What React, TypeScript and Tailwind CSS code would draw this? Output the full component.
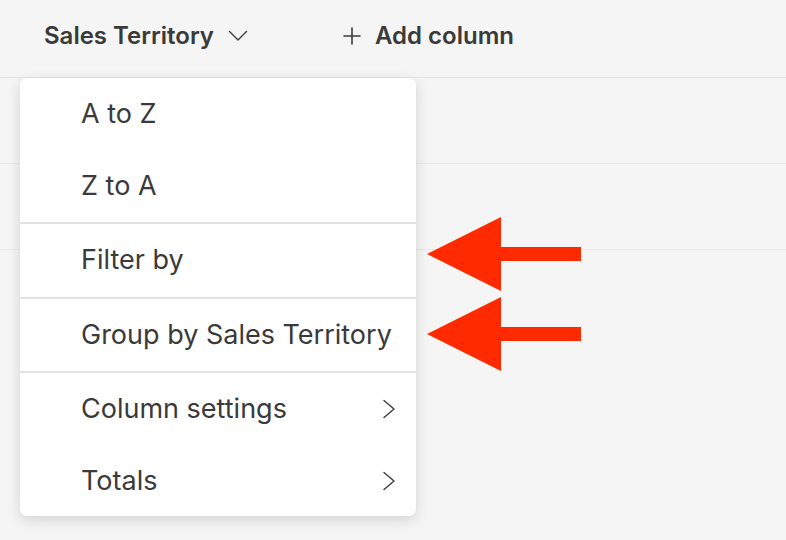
import React from "react";

function ChevronRight() {
  return (
    <svg width="14" height="20" viewBox="0 0 14 20" fill="none" stroke="#3b3b3b" strokeWidth="1.4" strokeLinecap="round" strokeLinejoin="round">
      <path d="M2 1.5 L12 10 L2 18.5" />
    </svg>
  );
}

function Arrow() {
  return (
    <svg width="156" height="76" viewBox="0 0 156 76">
      <polygon points="0,37 74,0 74,30 154,30 154,44 74,44 74,74" fill="#ff2a00" />
    </svg>
  );
}

export default function App() {
  const item = "flex items-center justify-between h-[72px] pl-[61px] pr-[20px] text-[27px] text-[#3a3a3a]";
  return (
    <div
      className="relative w-[786px] h-[540px] overflow-hidden bg-[#f5f5f5]"
      style={{ fontFamily: "Inter, 'Open Sans', sans-serif" }}
    >
      <div className="flex items-center h-[78px] pb-[6px] border-b border-[#e4e4e4] text-[24px] font-semibold text-[#3a3a3a]">
        <div className="flex items-center ml-[44px] w-[204px]">
          <span>Sales Territory</span>
          <svg className="ml-auto" width="20" height="12" viewBox="0 0 20 12" fill="none" stroke="#3a3a3a" strokeWidth="1.4" strokeLinecap="round" strokeLinejoin="round">
            <path d="M1.5 1.5 L10 10 L18.5 1.5" />
          </svg>
        </div>
        <div className="flex items-center ml-[95px]">
          <svg width="18" height="18" viewBox="0 0 18 18" fill="none" stroke="#3a3a3a" strokeWidth="1.6" strokeLinecap="round">
            <path d="M9 1 V17 M1 9 H17" />
          </svg>
          <span className="ml-[14px]">Add column</span>
        </div>
      </div>
      <div className="h-[86px] border-b border-[#e8e8e8]" />
      <div className="h-[86px] border-b border-[#e8e8e8]" />

      <div className="absolute left-[20px] top-[78px] w-[396px] h-[438px] bg-white rounded-[7px] shadow-[0_4px_14px_rgba(0,0,0,0.14)] flex flex-col">
        <div className="flex flex-col">
          <div className={item}>A to Z</div>
          <div className={item}>Z to A</div>
        </div>
        <div className="border-t-2 border-[#e2e2e2]">
          <div className={item + " h-[73px]"}>Filter by</div>
        </div>
        <div className="border-t-2 border-[#e2e2e2]">
          <div className={item + " h-[72px]"}>Group by Sales Territory</div>
        </div>
        <div className="border-t-2 border-[#e2e2e2]">
          <div className={item}>
            <span>Column settings</span>
            <ChevronRight />
          </div>
          <div className={item}>
            <span>Totals</span>
            <ChevronRight />
          </div>
        </div>
      </div>

      <div className="absolute left-[427px] top-[217px]">
        <Arrow />
      </div>
      <div className="absolute left-[427px] top-[297px]">
        <Arrow />
      </div>
    </div>
  );
}
